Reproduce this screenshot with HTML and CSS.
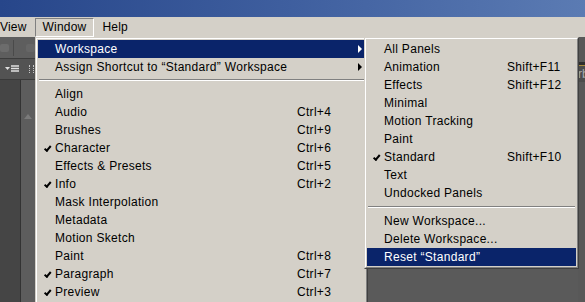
FILE: index.html
```html
<!DOCTYPE html>
<html>

<head>
    <meta charset="UTF-8">
    <title>Window menu</title>
    <link rel="stylesheet" href="styles.css">
</head>

<body>
    <div class="titlebar"></div>
    <div class="menubar">
        <span class="mb-item first">View</span>
        <span class="mb-item pressed">Window</span>
        <span class="mb-item">Help</span>
    </div>

    <div class="workarea">
        <div class="leftpanel">
            <div class="toolbar">
                <span class="tool-icon"></span>
                <span class="tool-sep"></span>
                <span class="tool-icon dim"></span>
            </div>
            <div class="panelhead">
                <svg width="14" height="8" viewBox="0 0 14 8">
                    <path d="M0 2h5l-2.5 3z" fill="#e0e0e0" />
                    <path d="M6 1h8M6 3.5h8M6 6h8" stroke="#e0e0e0" stroke-width="1.4" />
                </svg>
                <span class="dots"></span>
            </div>
            <div class="panelbody">
                <div class="col-dark"></div>
                <div class="col-scroll"><span class="uparrow"></span></div>
            </div>
        </div>
        <div class="canvas"></div>
        <div class="rightstrip">
            <div class="rs-band"></div>
            <div class="rs-label">rb</div>
        </div>
    </div>

    <!-- Window menu -->
    <div class="menu main-menu">
        <div class="menu-inner">
            <div class="item hl"><span class="chk"></span><span class="label">Workspace</span><span class="key"></span><span class="arrow"></span></div>
            <div class="item"><span class="chk"></span><span class="label">Assign Shortcut to “Standard” Workspace</span><span class="key"></span><span class="arrow"></span></div>
            <div class="sep"></div>
            <div class="item"><span class="chk"></span><span class="label">Align</span><span class="key"></span><span class="noarrow"></span></div>
            <div class="item"><span class="chk"></span><span class="label">Audio</span><span class="key">Ctrl+4</span><span class="noarrow"></span></div>
            <div class="item"><span class="chk"></span><span class="label">Brushes</span><span class="key">Ctrl+9</span><span class="noarrow"></span></div>
            <div class="item"><span class="chk on"></span><span class="label">Character</span><span class="key">Ctrl+6</span><span class="noarrow"></span></div>
            <div class="item"><span class="chk"></span><span class="label">Effects &amp; Presets</span><span class="key">Ctrl+5</span><span class="noarrow"></span></div>
            <div class="item"><span class="chk on"></span><span class="label">Info</span><span class="key">Ctrl+2</span><span class="noarrow"></span></div>
            <div class="item"><span class="chk"></span><span class="label">Mask Interpolation</span><span class="key"></span><span class="noarrow"></span></div>
            <div class="item"><span class="chk"></span><span class="label">Metadata</span><span class="key"></span><span class="noarrow"></span></div>
            <div class="item"><span class="chk"></span><span class="label">Motion Sketch</span><span class="key"></span><span class="noarrow"></span></div>
            <div class="item"><span class="chk"></span><span class="label">Paint</span><span class="key">Ctrl+8</span><span class="noarrow"></span></div>
            <div class="item"><span class="chk on"></span><span class="label">Paragraph</span><span class="key">Ctrl+7</span><span class="noarrow"></span></div>
            <div class="item"><span class="chk on"></span><span class="label">Preview</span><span class="key">Ctrl+3</span><span class="noarrow"></span></div>
        </div>
    </div>

    <!-- Workspace submenu -->
    <div class="menu sub-menu">
        <div class="menu-inner">
            <div class="item"><span class="chk"></span><span class="label">All Panels</span><span class="key"></span></div>
            <div class="item"><span class="chk"></span><span class="label">Animation</span><span class="key">Shift+F11</span></div>
            <div class="item"><span class="chk"></span><span class="label">Effects</span><span class="key">Shift+F12</span></div>
            <div class="item"><span class="chk"></span><span class="label">Minimal</span><span class="key"></span></div>
            <div class="item"><span class="chk"></span><span class="label">Motion Tracking</span><span class="key"></span></div>
            <div class="item"><span class="chk"></span><span class="label">Paint</span><span class="key"></span></div>
            <div class="item"><span class="chk on"></span><span class="label">Standard</span><span class="key">Shift+F10</span></div>
            <div class="item"><span class="chk"></span><span class="label">Text</span><span class="key"></span></div>
            <div class="item"><span class="chk"></span><span class="label">Undocked Panels</span><span class="key"></span></div>
            <div class="sep"></div>
            <div class="item"><span class="chk"></span><span class="label">New Workspace...</span><span class="key"></span></div>
            <div class="item"><span class="chk"></span><span class="label">Delete Workspace...</span><span class="key"></span></div>
            <div class="item hl"><span class="chk"></span><span class="label">Reset “Standard”</span><span class="key"></span></div>
        </div>
    </div>
</body>

</html>
```

FILE: styles.css
```css
/* classic windows menu look */
html {
    overflow: hidden;
}

body {
    margin: 0;
    width: 585px;
    height: 302px;
    overflow: hidden;
    font-family: "Liberation Sans", Arial, sans-serif;
    font-size: 12px;
    color: #000;
    background-color: #5a5a5a;
    position: relative;
}

.titlebar {
    height: 17px;
    background: linear-gradient(90deg, #27468a, #3f5f9f 50%, #5b7bb3);
}

.menubar {
    height: 20px;
    background-color: #d4d0c8;
    display: flex;
    align-items: center;
}

.mb-item {
    padding: 0 7px;
    height: 17px;
    line-height: 17px;
    border: 1px solid transparent;
    letter-spacing: 0.2px;
}

.mb-item.first {
    margin-left: -8px;
}

.mb-item.pressed {
    border-color: #808080 #fff #fff #808080;
}

.workarea {
    display: flex;
    height: 265px;
}

.leftpanel {
    width: 35px;
    display: flex;
    flex-direction: column;
    background-color: #5b5b5b;
}

.toolbar {
    height: 21px;
    display: flex;
    align-items: center;
    gap: 4px;
    background-color: #5e5e5e;
    border-bottom: 1px solid #3c3c3c;
}

.tool-icon {
    width: 10px;
    height: 8px;
    background-color: #6c6c6c;
    border-radius: 2px;
}

.tool-icon.dim {
    margin-left: 8px;
    background-color: #666;
}

.tool-sep {
    width: 1px;
    height: 16px;
    background-color: #4a4a4a;
}

.panelhead {
    height: 20px;
    display: flex;
    align-items: center;
    padding-left: 5px;
    gap: 10px;
    background-color: #535353;
    border-bottom: 1px solid #3a3a3a;
}

.dots {
    width: 3px;
    height: 8px;
    border-left: 1px dotted #c8c8c8;
    border-right: 1px dotted #c8c8c8;
}

.panelbody {
    flex: 1;
    display: flex;
}

.col-dark {
    width: 20px;
    background-color: #454545;
    border-right: 1px solid #333;
}

.col-scroll {
    flex: 1;
    background-color: #5d5d5d;
    display: flex;
    justify-content: center;
    padding-top: 34px;
}

.uparrow {
    width: 0;
    height: 0;
    border-left: 4px solid transparent;
    border-right: 4px solid transparent;
    border-bottom: 5px solid #7a7a7a;
}

.canvas {
    flex: 1;
    background-color: #5a5a5a;
}

.rightstrip {
    width: 7px;
    background-color: #585858;
    padding-top: 25px;
}

.rs-band {
    height: 3px;
    background-color: #2e2e2e;
    border-bottom: 1px solid #a88a3a;
}

.rs-label {
    height: 16px;
    line-height: 16px;
    color: #aaa;
    background-color: #4c4c4c;
    overflow: hidden;
    white-space: nowrap;
}

/* popup menus */
.menu {
    position: absolute;
    background-color: #d4d0c8;
    border: 1px solid;
    border-color: #d4d0c8 #404040 #404040 #d4d0c8;
    letter-spacing: 0.3px;
}

.menu-inner {
    border: 1px solid;
    border-color: #fff #808080 #808080 #fff;
    padding: 1px;
}

.main-menu {
    left: 35px;
    top: 37px;
    width: 331px;
    height: 264px;
    overflow: hidden;
    border-bottom: 0;
}

.sub-menu {
    left: 364px;
    top: 37px;
    width: 213px;
}

.item {
    display: flex;
    height: 18px;
    line-height: 18px;
    white-space: nowrap;
}

.item.hl {
    background-color: #0a246a;
    color: #fff;
}

.chk {
    width: 17px;
    flex-shrink: 0;
    position: relative;
}

.chk.on::after {
    content: "";
    position: absolute;
    left: 5px;
    top: 6px;
    width: 2px;
    height: 5px;
    border-right: 2px solid #000;
    border-bottom: 2px solid #000;
    transform: rotate(40deg);
    transform-origin: bottom right;
}

.label {
    flex: 1;
}

.key {
    width: 60px;
    flex-shrink: 0;
}

.sub-menu .key {
    width: 69px;
}

.arrow,
.noarrow {
    width: 8px;
    flex-shrink: 0;
    position: relative;
}

.arrow::after {
    content: "";
    position: absolute;
    left: 1px;
    top: 5px;
    border-top: 4px solid transparent;
    border-bottom: 4px solid transparent;
    border-left: 4px solid #000;
}

.item.hl .arrow::after {
    border-left-color: #fff;
}

.sep {
    height: 9px;
    position: relative;
}

.sep::after {
    content: "";
    position: absolute;
    left: 1px;
    right: 1px;
    top: 3px;
    border-top: 1px solid #808080;
    border-bottom: 1px solid #fff;
}

.sub-menu .sep {
    height: 10px;
}

.sub-menu .sep::after {
    top: 4px;
}
```
